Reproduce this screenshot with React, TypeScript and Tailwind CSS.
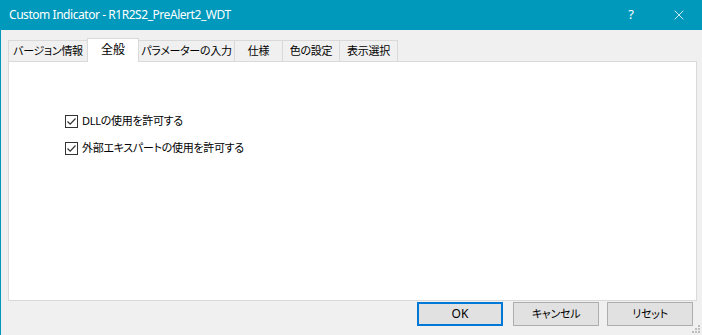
import { X } from "lucide-react";

const tabs = [
  { label: "バージョン情報", w: "w-[80px]" },
  { label: "全般", w: "w-[52px]", active: true },
  { label: "パラメーターの入力", w: "w-[97px]" },
  { label: "仕様", w: "w-[49px]" },
  { label: "色の設定", w: "w-[58px]" },
  { label: "表示選択", w: "w-[59px]" },
];

const options = ["DLLの使用を許可する", "外部エキスパートの使用を許可する"];

function CheckBox() {
  return (
    <span className="w-[13px] h-[13px] border border-[#333333] bg-white flex items-center justify-center shrink-0">
      <svg width="11" height="11" viewBox="0 0 11 11">
        <path d="M1.5 5.5 L4.2 8.2 L9.5 2.5" fill="none" stroke="#333333" strokeWidth="1.2" />
      </svg>
    </span>
  );
}

function Btn({ label, primary }: { label: string; primary?: boolean }) {
  return (
    <button
      className={
        primary
          ? "w-[86px] h-[24px] bg-[#e1e1e1] border-2 border-[#0078d7] text-[12px] text-black flex items-center justify-center"
          : "w-[86px] h-[24px] bg-[#e1e1e1] border border-[#adadad] text-[11px] tracking-[-0.3px] text-black flex items-center justify-center"
      }
    >
      {label}
    </button>
  );
}

export default function App() {
  return (
    <div
      className="relative w-[702px] h-[335px] bg-[#f0f0f0] border-l border-[#0099bc] flex flex-col overflow-hidden [font-feature-settings:'palt']"
      style={{ fontFamily: '"Noto Sans", "Noto Sans CJK JP", sans-serif' }}
    >
      {/* Title bar */}
      <div className="h-[30px] bg-[#0099bc] flex items-center pl-[8px] text-white">
        <span className="text-[12px] tracking-[-0.45px] flex-1">Custom Indicator - R1R2S2_PreAlert2_WDT</span>
        <span className="text-[13px] w-[46px] text-center mr-[2px]">?</span>
        <span className="w-[46px] flex justify-center">
          <X size={16} strokeWidth={1.2} />
        </span>
      </div>

      {/* Tabs */}
      <div className="mt-[8px] ml-[8px] h-[23px] flex items-end">
        {tabs.map((t) =>
          t.active ? (
            <div
              key={t.label}
              className={`${t.w} -ml-px h-[24px] mb-[-1px] relative z-10 bg-white border border-b-0 border-[#d9d9d9] flex items-center justify-center whitespace-nowrap text-[12px] text-black pb-[2px]`}
            >
              {t.label}
            </div>
          ) : (
            <div
              key={t.label}
              className={`${t.w} -ml-px h-[21px] bg-[#f0f0f0] border border-b-0 border-[#d9d9d9] flex items-center justify-center whitespace-nowrap text-[11px] tracking-[-0.3px] text-black`}
            >
              {t.label}
            </div>
          )
        )}
      </div>

      {/* Panel */}
      <div className="ml-[7px] w-[689px] h-[240px] bg-white border border-[#d9d9d9] pl-[56px] pt-[53px] flex flex-col gap-[14px]">
        {options.map((o) => (
          <label key={o} className="flex items-center gap-[4px] h-[13px] text-[11px] tracking-[-0.3px] text-black whitespace-nowrap">
            <CheckBox />
            <span>{o}</span>
          </label>
        ))}
      </div>

      {/* Buttons */}
      <div className="mt-[1px] ml-[416px] flex">
        <Btn label="OK" primary />
        <div className="w-[10px]" />
        <Btn label="キャンセル" />
        <div className="w-[8px]" />
        <Btn label="リセット" />
      </div>

      {/* Size grip */}
      <svg className="absolute right-[2px] bottom-[2px]" width="8" height="8" viewBox="0 0 8 8">
        <rect x="6" y="0" width="2" height="2" fill="#bdbdbd" />
        <rect x="3" y="3" width="2" height="2" fill="#bdbdbd" />
        <rect x="6" y="3" width="2" height="2" fill="#bdbdbd" />
        <rect x="0" y="6" width="2" height="2" fill="#bdbdbd" />
        <rect x="3" y="6" width="2" height="2" fill="#bdbdbd" />
        <rect x="6" y="6" width="2" height="2" fill="#bdbdbd" />
      </svg>
    </div>
  );
}
